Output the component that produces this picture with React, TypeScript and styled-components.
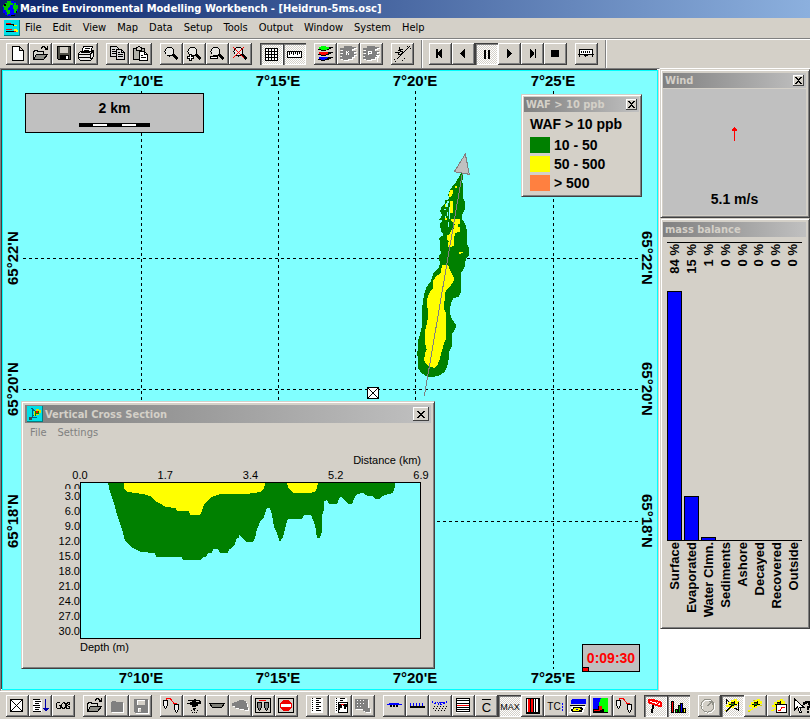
import React, { ReactNode } from "react";
import styled, { createGlobalStyle, css } from "styled-components";

const face = "#d4d0c8";
const shade = "#808080";
const dark = "#404040";
const water = "#80ffff";
const oil = "#008000";
const thick = "#ffff00";

const tahoma = `"DejaVu Sans Condensed", "DejaVu Sans", sans-serif`;
const arial = `"Liberation Sans", Arial, sans-serif`;

const GlobalStyle = createGlobalStyle`
  * { box-sizing: border-box; }
  body { margin: 0; background: #fff; overflow: hidden; }
  button { font: inherit; color: inherit; }
`;

const Page = styled.div`
  display: flex;
  flex-direction: column;
  min-height: 100vh;
  overflow: hidden;
  font-family: ${arial};
  font-size: 11px;
  color: #000;
  background: ${face};
`;

const TitleBar = styled.header`
  display: flex;
  align-items: center;
  gap: 1px;
  height: 18px;
  padding-left: 2px;
  background: linear-gradient(90deg, #0a246a, #8cb0de);
  color: #fff;
`;

const AppTitle = styled.h1`
  margin: 0;
  font: bold 11px/16px ${tahoma};
  white-space: nowrap;
`;

const MenuBar = styled.nav`
  display: flex;
  align-items: center;
  height: 21px;
  padding-left: 4px;
  border-bottom: 1px solid ${shade};
`;

const MenuItem = styled.button`
  padding: 0 6px 0 5px;
  border: 0;
  background: none;
  font: 11px/16px ${tahoma};
  &:disabled { color: ${shade}; }
`;

const ToolBar = styled.div<{ $height: number }>`
  display: flex;
  height: ${(p) => p.$height}px;
  padding: 3px 0 0 6px;
  border-top: 1px solid #fff;
  gap: 8px;
  flex: none;
  overflow: hidden;
`;

const Group = styled.div`
  display: flex;
  flex: none;
`;

const Divider = styled.div`
  flex: none;
  width: 2px;
  height: 28px;
  margin: -3px -2px 0 -1px;
  border-left: 1px solid ${shade};
  border-right: 1px solid #fff;
`;

const ToolButton = styled.button<{ $pressed?: boolean }>`
  display: block;
  flex: none;
  width: 23px;
  height: 22px;
  padding: 0;
  border: 0;
  overflow: hidden;
  ${(p) =>
    p.$pressed
      ? css`
          background: repeating-conic-gradient(#fff 0 25%, ${face} 0 50%) 0 0 / 2px 2px;
          box-shadow: inset 1px 1px ${dark}, inset 2px 2px ${shade}, inset -1px -1px #fff;
        `
      : css`
          background: ${face};
          box-shadow: inset -1px -1px ${dark}, inset 1px 1px #fff, inset -2px -2px ${shade};
        `}
`;

const Glyph = styled.svg`
  display: block;
  shape-rendering: crispEdges;
`;

const Workspace = styled.main`
  display: flex;
  flex: 1;
  background: #fff;
`;

const MapFrame = styled.section`
  display: flex;
  flex: 1;
  border-style: solid;
  border-width: 1px;
  border-color: ${shade} #fff ${face} ${shade};
`;

const MapCanvas = styled.div`
  position: relative;
  flex: 1;
  overflow: hidden;
  background: ${water};
  border: 1px solid #00ffff;
  margin: 1px 1px 0 1px;
  box-shadow: -1px -1px ${dark}, 1px 0 ${face};
`;

const Grid = styled.svg`
  position: absolute;
  inset: 20px 18px 20px 20px;
  width: calc(100% - 38px);
  height: calc(100% - 40px);
  shape-rendering: crispEdges;
`;

const Slick = styled.svg`
  position: absolute;
  left: 397px;
  top: 69px;
  shape-rendering: crispEdges;
`;

const Marker = styled.svg`
  position: absolute;
  left: 364px;
  top: 316px;
  shape-rendering: crispEdges;
`;

const Longitude = styled.span<{ $x: number; $edge: "top" | "bottom" }>`
  position: absolute;
  left: ${(p) => p.$x}px;
  ${(p) => p.$edge}: ${(p) => (p.$edge === "top" ? 1 : 3)}px;
  width: 60px;
  margin-left: -30px;
  text-align: center;
  font: bold 15px/17px ${arial};
`;

const Latitude = styled.span<{ $y: number; $edge: "left" | "right" }>`
  position: absolute;
  top: ${(p) => p.$y}px;
  ${(p) => p.$edge}: 1px;
  height: 60px;
  margin-top: -30px;
  text-align: center;
  writing-mode: vertical-rl;
  font: bold 15px/17px ${arial};
  ${(p) => p.$edge === "left" && "transform: rotate(180deg);"}
`;

const ScaleBox = styled.div`
  position: absolute;
  left: 22px;
  top: 22px;
  display: flex;
  flex-direction: column;
  align-items: center;
  gap: 6px;
  width: 179px;
  height: 40px;
  padding-top: 6px;
  border: 1px solid #000;
  background: #c0c0c0;
  font: bold 14px/17px ${arial};
`;

const Clock = styled.div`
  position: absolute;
  right: 17px;
  bottom: 17px;
  width: 58px;
  height: 28px;
  border: 1px solid #000;
  background: #c0c0c0;
  color: #f00;
  font: bold 14px/26px ${arial};
  text-align: center;
`;

const Elapsed = styled.i`
  position: absolute;
  left: -1px;
  bottom: -1px;
  width: 7px;
  height: 5px;
  border: 1px solid #000;
  background: #f00;
`;

const windowFrame = css`
  padding: 1px;
  background: ${face};
  border: 1px solid;
  border-color: ${face} ${dark} ${dark} ${face};
  box-shadow: inset 1px 1px #fff, inset -1px -1px ${shade};
`;

const LegendWindow = styled.section`
  ${windowFrame}
  position: absolute;
  left: 518px;
  top: 23px;
  width: 121px;
  padding: 2px 2px 2px;
`;

const SectionWindow = styled.section`
  ${windowFrame}
  position: absolute;
  left: 18px;
  top: 330px;
  width: 414px;
  padding: 3px 3px 13px;
`;

const Caption = styled.header<{ $height: number }>`
  display: flex;
  align-items: center;
  justify-content: space-between;
  height: ${(p) => p.$height}px;
  padding: 0 2px;
  background: linear-gradient(90deg, #808080, #c0c0c0);
  color: ${face};
`;

const CaptionText = styled.h2`
  display: flex;
  align-items: center;
  gap: 2px;
  margin: 0;
  font: bold 11px/15px ${tahoma};
  white-space: nowrap;
`;

const CloseButton = styled.button<{ $large?: boolean }>`
  display: grid;
  place-items: center;
  width: ${(p) => (p.$large ? 16 : 11)}px;
  height: ${(p) => (p.$large ? 14 : 11)}px;
  padding: 0;
  border: 0;
  background: ${face};
  box-shadow: inset -1px -1px ${dark}, inset 1px 1px #fff;
`;

const Legend = styled.div`
  padding: 4px 5px 0 6px;
  font: bold 14px/16px ${arial};
  white-space: nowrap;
`;

const LegendTitle = styled.div`
  line-height: 17px;
  margin-bottom: 4px;
`;

const LegendRow = styled.div`
  display: flex;
  gap: 4px;
  margin-bottom: 3px;
`;

const Swatch = styled.span<{ $color: string }>`
  width: 20px;
  height: 16px;
  background: ${(p) => p.$color};
`;

const SectionMenu = styled.nav`
  display: flex;
  height: 20px;
  align-items: center;
`;

const SectionBody = styled.div`
  display: grid;
  grid-template-columns: 55px 341px;
  padding-top: 9px;
  font: 11px/14px ${arial};
`;

const AxisName = styled.div<{ $end?: boolean }>`
  grid-column: 2;
  text-align: ${(p) => (p.$end ? "right" : "left")};
  line-height: 16px;
`;

const DistanceAxis = styled.div`
  grid-column: 2;
  display: flex;
  justify-content: space-between;
  margin: 0 -15px;
  line-height: 14px;
`;

const Tick = styled.span`
  width: 30px;
  text-align: center;
`;

const DepthAxis = styled.div`
  display: flex;
  flex-direction: column;
  text-align: right;
  line-height: 15px;
`;

const DepthTick = styled.span<{ $cut?: boolean }>`
  height: ${(p) => (p.$cut ? 7 : 15)}px;
  line-height: ${(p) => (p.$cut ? 12 : 15)}px;
  overflow: hidden;
`;

const Plot = styled.div`
  border: 1px solid #000;
  background: ${water};
`;

const Profile = styled.svg`
  display: block;
  width: 100%;
  shape-rendering: crispEdges;
`;

const SideColumn = styled.aside`
  flex: none;
  width: 150px;
  padding-top: 1px;
`;

const SideWindow = styled.section`
  ${windowFrame}
  padding: 3px 3px 2px 2px;
`;

const WindBody = styled.div`
  display: flex;
  flex-direction: column;
  align-items: center;
  justify-content: space-between;
  height: 126px;
  margin-top: 1px;
  padding: 38px 0 7px;
  background: #c0c0c0;
  font: bold 14px/17px ${arial};
`;

const Balance = styled.div`
  padding: 5px 4px 4px;
  font: bold 13px/15px ${arial};
`;

const Columns = styled.div`
  display: flex;
  height: 299px;
  border-top: 1px solid #000;
  border-bottom: 1px solid #000;
`;

const Column = styled.div`
  display: flex;
  flex-direction: column;
  justify-content: space-between;
  width: 17px;
  padding-top: 1px;
`;

const Upright = styled.span`
  writing-mode: vertical-rl;
  transform: rotate(180deg);
  white-space: pre;
  width: 15px;
`;

const Bar = styled.i`
  display: block;
  width: 15px;
  background: #00f;
  border: solid #000;
  border-width: 1px 1px 0;
`;

const Names = styled.div`
  display: flex;
  align-items: flex-start;
  gap: 2px;
  height: 81px;
  padding-top: 1px;
`;

function Icon({ children }: { children: ReactNode }) {
  return (
    <Glyph width="23" height="22" viewBox="0 0 23 22" fill="none" stroke="#000" aria-hidden="true">
      {children}
    </Glyph>
  );
}

function Greyed({ d }: { d: string }) {
  return (
    <g stroke="none" fillRule="evenodd">
      <path d={d} fill="#fff" transform="translate(1 1)" />
      <path d={d} fill={shade} />
    </g>
  );
}

function Lens() {
  return (
    <>
      <circle cx="9.5" cy="8.5" r="4.5" fill="#e8e8e4" />
      <path d="M12.5 11.5l5 5M13.5 11.5l4.5 4.5" strokeWidth="1.5" />
    </>
  );
}

const folder = (
  <>
    <path d="M4.5 16.5v-8h1v-1h3v1h6v3" fill="#d8d8d0" />
    <path d="M4.5 16.5l3-5h11l-4 5z" fill="#909088" />
    <path d="M12.5 5.5v-1h1v-1h2v1h1v1h2M18.5 3v3h-3" />
  </>
);

const pins = (
  <>
    <path d="M3.5 5.5h4v5l-2 3l-2-3zM14.5 9.5h4v5l-2 3l-2-3z" fill="#eee" />
    <path d="M5.5 4.5h1v-1h4v1h1v1l2 2v1h3" stroke="#f00" />
  </>
);

const layersShape =
  "M7 3h8v1h4v1h-2v1h-2v2h4v1h-2v2h2v1h-2v2h-2v2h-4v1h-5v-1h-3v-2h2v-1h-2v-2h3v-1h-3v-2h3v-1h-3v-2h4z";

const blob = (
  <g stroke="none">
    <path d="M10 5h3v-1h3v2h2v3h-2v2h-3v2h-5v-1h-3v-2h2v-3h3z" fill="#ff0" />
    <path d="M11 7h2v-1h1v3h2v1h-3v1h-2v1h-1v-2h-2v-1h2v-2z" fill="#000" />
    <path d="M10 8h3v2h-3z" fill="#080" />
    <path d="M4 15h2v-1h2v-1h1v2h-2v1h-3z" fill="#ff0" />
    <path d="M11 8h1v1h-1z" fill="#f00" />
  </g>
);

type Tool = { name: string; icon: ReactNode; pressed?: boolean; disabled?: boolean };
const t = (name: string, icon: ReactNode, pressed = false, disabled = false): Tool => ({ name, icon, pressed, disabled });

const openTool = t("Open", folder);
const saveShape = "M5 4h14v14h-13l-1-1zM8 5v5h8v-5zM9 13v4h3v-4z";

const fileTools: Tool[][] = [
  [
    t("New", <path d="M6.5 3.5h7l3.5 3.5v10h-10.5zM13.5 3.5v4h3.5" fill="#fff" />),
    openTool,
    t("Save", <>
      <path d="M5.5 3.5h13v13h-12l-1-1z" fill="#505048" />
      <path d="M8 4h8v6h-8z" fill={face} stroke="none" />
      <path d="M8 12h9v5h-9z" fill="#000" stroke="none" /><path d="M14 13h2v3h-2z" fill="#fff" stroke="none" />
    </>),
    t("Print", <>
      <path d="M6.5 9.5l2-6h9l-2 6" fill="#fff" /><path d="M9.5 5.5h5M8.5 7.5h5" />
      <path d="M3.5 10.5l2-2h11l2-1v6l-3 4h-10l-2-2z" fill="#e8e8e8" />
      <path d="M3 11.5h12l3-3M4 14.5h12M15.5 11v5M6 9.5h9" />
    </>),
  ],
  [
    t("Copy", <>
      <path d="M4.5 3.5h6l2.5 3v7h-8.5z" fill="#d8d8d8" /><path d="M6 6.5h3M6 8.5h5M6 10.5h5" />
      <path d="M10.5 6.5h5l3 3v7h-8z" fill="#d8d8d8" /><path d="M15.5 6.5v3h3M12 9.5h2M12 11.5h5M12 13.5h5" />
    </>),
    t("Paste", <>
      <path d="M4.5 5.5h11v11h-11z" fill="#b0b0a8" /><path d="M7.5 7.5v-3h1l1-1h1l1 1h1v3z" fill={face} />
      <path d="M10.5 8.5h5l3 3v6h-8z" fill="#fff" /><path d="M15.5 8.5v3h3M12 12.5h2M12 14.5h5" />
    </>),
  ],
  [
    t("Zoom", <Lens />),
    t("Zoom in", <><Lens /><path d="M6.5 11.5h2v2h2v2h-2v2h-2v-2h-2v-2h2z" fill="#fff" /></>),
    t("Zoom out", <><Lens /><path d="M4.5 13.5h7v2h-7z" fill="#fff" /></>),
    t("Reset zoom", <><Lens /><path d="M4 4l11 11M15 4l-11 11" stroke="#f00" /></>),
  ],
  [
    t("Grid", <path d="M5.5 5.5h12v12h-12zM8.5 5v13M11.5 5v13M14.5 5v13M5 8.5h13M5 11.5h13M5 14.5h13" fill="#fff" />, true),
    t("Scale", <><path d="M4.5 8.5h14v6h-14z" fill="#fff" /><path d="M6.5 9v3M8.5 9v2M10.5 9v3M12.5 9v2M14.5 9v3M16.5 9v2" /></>, true),
  ],
  [
    t("Layers", <g stroke="none">
      <path d="M8 14h11v1h-2v1h-2v1h-4v1h-4v-1h-3v-1h2z" fill="#000" /><path d="M5 14h9v1h-1v1h-2v1h-4v-1h-2v-1h-1z" fill="#00f" />
      <path d="M8 9h11v1h-2v1h-2v1h-3v1h-5v-1h-3v-1h2z" fill="#000" /><path d="M5 9h9v2h-2v1h-5v-1h-2v-1h-1z" fill="#f00" />
      <path d="M8 4h11v1h-2v1h-2v1h-3v1h-5v-1h-3v-1h2z" fill="#000" /><path d="M7 3h5v1h3v2h-2v1h-6v-1h-2v-2h2z" fill="#0f0" />
    </g>),
    t("Layer record", <><Greyed d={layersShape} /><path d="M9.5 8v4M10 9.500h1M11.5 8v1M11.5 10v2" stroke="#fff" /></>, false, true),
    t("Layer query", <><Greyed d={layersShape} /><path d="M8.5 8v4M9 8.5h2v2h-2M15.5 12.5h3v2l-1 1v3" stroke="#fff" /></>, false, true),
  ],
  [
    t("Measure", <>
      <path d="M17.5 4.5l-12 12" /><path d="M3.5 16v2h2M16 3.5h3v2M13.5 15v2M11 17.5h2" strokeDasharray="1 1" />
      <path d="M11.5 6.5h-3l-1 1l4 1v1l-1 2h-3v-2M8.5 4v3M4 9.5h5" />
    </>),
  ],
];

const solid = (d: string) => <path d={d} fill="#000" stroke="none" />;

const playTools: Tool[][] = [
  [
    t("First", solid("M7 6h2v9h-2zM13 6v9h-1v-1h-1v-1h-1v-1h-1v-3h1v-1h1v-1h1v-1z")),
    t("Back", solid("M13 6v9h-1v-1h-1v-1h-1v-1h-1v-1h-1v-1h1v-1h1v-1h1v-1h1v-1z")),
    t("Pause", solid("M9 7h2v9h-2zM13 7h2v9h-2z"), true),
    t("Play", solid("M9 6v9h1v-1h1v-1h1v-1h1v-1h1v-1h-1v-1h-1v-1h-1v-1h-1v-1z")),
    t("Last", solid("M14 6h1v9h-1zM9 6v9h1v-1h1v-1h1v-1h1v-3h-1v-1h-1v-1h-1v-1z")),
    t("Stop", solid("M7 7h8v7h-8z")),
  ],
  [
    t("Timeline", <>
      <path d="M4.5 6.5h13v5h-13z" fill="#fff" /><path d="M6.5 8v2M8.5 8v2M10.5 8v2M12.5 8v2M14.5 8v2" />
      <path d="M3 11.5h16M4.5 11v3M17.5 11v3M10.5 12v2M9 12.5h4" />
    </>),
  ],
];

const statusTools: Tool[][] = [
  [
    t("Site", <path d="M4.5 4.5h12v12h-12zM5 5l11 11M16 5l-11 11" fill="#fff" />),
    t("Sort list", <>
      <path d="M3.5 4.5h9v12h-9z" fill="#fff" stroke="none" /><path d="M4 4.5h7M6 6.5h6M6 8.5h4M4 10.5h7M6 12.5h5M6 14.5h4M4 16.5h8" />
      <path d="M16.5 4v12M13.5 13.5h6M14.5 14.5h4M15.5 15.5h2" stroke="#00a" />
    </>),
    t("Link", <><path d="M8.5 8.5l-1-1h-2l-1 1v4l1 1h3v-3h-2M11.5 7.5h1l1 2v2l-1 2h-2l-1-2v-2zM14 8.5l3-1v2l-2 1l2 1v2h-2l-1-2z" /><path d="M8 10.5h2M13 10.5h2" /></>),
  ],
  [
    openTool,
    t("Folder", <Greyed d="M5 7h1v-1h4v1h7v10h-12z" />, false, true),
    t("Save run", <Greyed d={saveShape} />, false, true),
  ],
  [
    t("Drifters", pins),
    t("Aircraft", <>{solid("M5 5h6v-1h2v1h4v1h1v3h-3v2h-2v1h-4v-2h-2v-1h-3v-1h3v-1h2v-1h-4zM10 13h3v1h-1v2h-1v-1h-1z")}<path d="M8 15.5h1M14 15.5h1M11.5 17v1M9 17.5h1M13 17.5h1" /><path d="M13 6.5h3" stroke={face} /></>),
    t("Boom", <path d="M3.5 8.5h15l-3 4h-9z" fill="#808078" />),
    t("Oil drift", <Greyed d="M3 8h2v-1h3v-1h2v-1h5v1h2v2h1v4h1v3h-4v-1h-5v-1h-4v-2h-3z" />, false, true),
    t("Response", <><path d="M3.5 3.5h15v14h-15z" /><path d="M5.5 7.5h4v5l-2 3l-2-3zM12.5 7.5h4v5l-2 3l-2-3z" fill="#808080" /><path d="M6.5 6.5l1-1h6l1 1" stroke="#f00" /></>),
    t("No entry", <><path d="M3.5 3.5h15v14h-15z" /><circle cx="11" cy="10.5" r="6" fill="#e00" stroke="none" /><path d="M6 9h10v3h-10z" fill="#fff" stroke="none" /></>),
  ],
  [
    t("Report", <><path d="M5 3h12v15h-12z" fill="#fff" stroke="none" /><path d="M6 3.5h1M6 5.5h1M6 7.5h1M6 9.5h1M6 11.5h1M6 13.5h1M6 15.5h1M10 3.5h5M10 5.5h3M10 7.5h5M10 9.5h3M10 11.5h5M10 13.5h3M10 15.5h5" /></>),
    t("Chart report", <><path d="M6 3h12v15h-12z" fill="#fff" stroke="none" /><path d="M7.5 3v14" strokeDasharray="1 1" /><path d="M11 3.5h5M11 5.5h3" /><path d="M9 7.5h9v10h-9z" /><path d="M10 9h3v4h-2v2h-1zM14 9h4v3h-1v2h-2v-3h-1z" fill="#000" stroke="none" /><path d="M12 9.5h3" stroke="#f00" /></>),
    t("Key table", <Greyed d="M3 4h13v9h2v4h-5v-1h-2v-2h-8zM5 5v1h1v-1zM8 5v1h1v-1zM11 5v1h1v-1zM5 8v1h1v-1zM8 8v1h1v-1zM11 8v1h1v-1zM5 11v1h1v-1zM8 11v1h1v-1z" />, false, true),
  ],
  [
    t("Surface layer", <><path d="M4 9h2v-1h10v1h3v1h-15z" fill="#00f" stroke="none" /><path d="M7 10.5h9" strokeWidth="2" strokeDasharray="2 1" /></>),
    t("Surface depth", <><path d="M4 9.5h15" stroke="#00f" strokeDasharray="1 2" strokeWidth="3" /><path d="M4 12h15" strokeWidth="2" /></>),
    t("Water column", <><path d="M3.5 6v2h2v1h1v-2h2v2h1v-2h2v2h1v-2h2v2h1v-2h2v-1" stroke="#00f" strokeDasharray="2 1" /><path d="M5 11.5h13M4 13.5h13M6 15.5h11" strokeDasharray="1 2" /></>),
    t("Depth levels", <><path d="M4 3h14v15h-14z" fill="#fff" stroke="none" /><path d="M4 3.5h14M4 5.5h14M4 8.5h14M4 12.5h14M4 14.5h14M4 16.5h14M4.5 3v14M17.5 3v14" /><path d="M5 10.5h12" stroke="#f00" /></>),
    t("Mean concentration", <><path d="M7 4.5h9" /><text x="11.5" y="17" textAnchor="middle" fontFamily="Liberation Sans" fontSize="13" fill="#000" stroke="none">C</text></>),
    t("Maximum", <text x="12" y="15" textAnchor="middle" fontFamily="Liberation Sans" fontSize="9" fill="#000" stroke="none">MAX</text>, true),
    t("Time slices", <><path d="M5 3h13v15h-13z" fill="#fff" /><path d="M7.5 3v14M10.5 3v14" stroke="#f00" strokeWidth="2" /><path d="M5.5 3v15M9.5 3v15M12.5 3v15M14.5 3v15M17.5 3v15M5 3.5h13M5 17.5h13" /></>),
    t("Time course", <><text x="10" y="15" textAnchor="middle" fontFamily="Liberation Sans" fontSize="10" fill="#000" stroke="none">TC</text><path d="M18.5 8v9" stroke="#00f" strokeDasharray="2 1" /></>),
    t("Depth view", <g stroke="none"><path d="M5 4h14v5h-15v-4h1z" fill="#00f" /><path d="M3 10h15v1h-15z" fill="#000" /><path d="M5 11h14l-3 7h-14z" fill="#fff" /><path d="M6 12h9v1h1v2h-1v2h-10v-1h-1v-2h2z" fill="#000" /><path d="M7 13h6v1h1v1h-2v1h-6v-2h1z" fill="#ff0" /><path d="M9 14h2v1h-2z" fill="#00c" /></g>),
    t("Contours", <g stroke="none"><path d="M3 3h9v15h-9z" fill="#00f" /><path d="M11 3h7v15h-7l-2-10z" fill="#0f0" /><path d="M3 14h5v-3h4v3h2v3h4v1h-15z" fill="#000" /><path d="M9 11h3v3h-3zM4 15h5v-1h3v1h-2v1h-6z" fill="#f00" /></g>),
    t("Trajectory", pins),
  ],
  [
    t("Spill source", <><path d="M5 4.5h3l9 3v3h-3l-9-3z" fill="#fff" stroke="#f00" strokeWidth="2" /><path d="M8 6h2l5 3" stroke="#f00" /><path d="M9.5 10l-2 8" strokeWidth="2" /></>, true),
    t("Mass balance", <g stroke="none"><path d="M4 6h3v12h-3zM8 14h3v4h-3zM11 10h3v8h-3zM13 8h3v10h-3zM16 13h3v5h-3z" fill="#000" /><path d="M5 7h1v10h-1z" fill="#f00" /><path d="M9 15h1v2h-1z" fill="#0c0" /><path d="M12 11h1v6h-1z" fill="#080" /><path d="M14 9h1v8h-1z" fill="#00f" /><path d="M17 14h1v3h-1z" fill="#ff0" /></g>, true),
  ],
  [
    t("Wind", <><circle cx="10.5" cy="11.5" r="6.5" stroke="#fff" /><circle cx="9.5" cy="10.5" r="6.5" stroke="#909088" /><path d="M9.5 11l4-4M11 6.5h3v3" stroke="#909088" /></>, false, true),
    t("Cross section", <>{blob}<path d="M5.5 4.5v4M5 4.5l3 2M17.5 7v8l-4-2M5 16.5l5-5" /></>, true),
    t("Slick", <>{blob}<path d="M9 5h2M16 10h2M4 16h2" stroke="#cc0" /></>),
    t("Slick chart", <>{blob}<path d="M9.5 9.5h10v8h-10z" fill="#fff" /><path d="M11 15.5h2l2-3h3" stroke="#f00" /></>),
    t("Context help", <><path d="M4.5 4v11l3-3l2 5h2l-2-5h4z" fill="#fff" /><path d="M14 10v-2h2v-1h3v2h1v3h-2v3M17 17h2" strokeWidth="2" /></>),
  ],
];

function Tools({ groups }: { groups: Tool[][] }) {
  return (
    <>
      {groups.map((g, i) => (
        <Group key={i}>
          {g.map((tool) => (
            <ToolButton key={tool.name} type="button" aria-label={tool.name} $pressed={tool.pressed} disabled={tool.disabled}>
              <Icon>{tool.icon}</Icon>
            </ToolButton>
          ))}
        </Group>
      ))}
    </>
  );
}

function Close({ large }: { large?: boolean }) {
  return (
    <CloseButton type="button" aria-label="Close" $large={large}>
      <Glyph width={large ? 8 : 7} height="7" viewBox="0 0 8 7" aria-hidden="true">
        <path d="M0 0h2v1h1v1h2v-1h1v-1h2v1h-1v1h-1v1h-1v1h1v1h1v1h1v1h-2v-1h-1v-1h-2v1h-1v1h-2v-1h1v-1h1v-1h1v-1h-1v-1h-1v-1h-1z" />
      </Glyph>
    </CloseButton>
  );
}

const menus = ["File", "Edit", "View", "Map", "Data", "Setup", "Tools", "Output", "Window", "System", "Help"];
const meridians = [
  { label: "7°10'E", x: 138 },
  { label: "7°15'E", x: 275 },
  { label: "7°20'E", x: 412 },
  { label: "7°25'E", x: 550 },
];
const parallels = [
  { label: "65°22'N", y: 187 },
  { label: "65°20'N", y: 318 },
  { label: "65°18'N", y: 450 },
];
const legend = [
  { label: "10 - 50", color: oil },
  { label: "50 - 500", color: thick },
  { label: "> 500", color: "#ff8040" },
];
const balance = [
  { name: "Surface", value: 84 },
  { name: "Evaporated", value: 15 },
  { name: "Water Clmn.", value: 1 },
  { name: "Sediments", value: 0 },
  { name: "Ashore", value: 0 },
  { name: "Decayed", value: 0 },
  { name: "Recovered", value: 0 },
  { name: "Outside", value: 0 },
];
const depths = ["0.0", "3.0", "6.0", "9.0", "12.0", "15.0", "18.0", "21.0", "24.0", "27.0", "30.0"];

const slickOutline =
  "190,100 187,125 190,145 190,175 194,185 194,210 185,225 185,235 195,250 200,270 200,310 208,325 208,345 198,355 194,380 183,400 183,455 177,470 160,475 152,490 150,520 157,540 169,555 165,568 157,580 155,620 147,635 145,670 135,695 115,708 85,712 65,700 55,685 52,640 55,600 66,560 67,500 72,465 80,440 92,425 100,400 115,385 120,370 116,350 122,340 120,305 117,295 130,285 122,270 120,250 130,242 116,240 128,225 120,215 125,200 135,192 135,182 147,178 145,165 150,148 165,130 178,110 182,100";
const slickCore =
  "126,375 145,375 150,390 162,415 160,425 150,440 140,450 134,460 133,510 138,520 137,600 132,610 125,635 120,655 112,675 105,683 90,682 78,672 72,662 75,640 80,630 75,610 75,575 82,545 84,520 80,480 90,455 100,445 100,420 110,408 122,400";

const profileOuter =
  "27,0 29,9 31,14 34,24 36,32 39,40 42,50 44,58 47,61 52,65 60,69 74,70 75,74 101,74 102,77 120,77 121,75 126,73 127,70 131,70 132,66 137,66 139,70 147,70 148,66 151,65 154,61 156,55 158,55 158,51 160,54 162,55 165,59 172,59 174,55 176,46 180,37 183,34 186,25 189,25 191,32 193,44 196,50 199,59 202,54 205,42 207,36 221,36 223,32 230,32 234,42 236,55 239,55 241,49 241,32 243,27 243,18 246,17 248,21 256,21 258,16 260,13 262,16 267,21 271,21 273,16 276,11 282,10 287,13 292,13 294,16 299,16 301,13 308,11 312,10 314,4 314,0";
const profileCore =
  "43,0 43,6 47,9 62,11 71,14 73,17 78,20 85,24 95,25 96,28 108,28 109,32 119,32 121,28 123,22 126,18 131,14 139,11 166,11 179,9 183,6 184,0";

export default function App() {
  return (
    <>
      <GlobalStyle />
      <Page>
        <TitleBar>
          <Glyph width="17" height="16" viewBox="0 0 17 16" aria-hidden="true">
            <path d="M5 0h7v1h2v2h2v8h-2v2h-2v2h-7v-1h-2v-2h-2v-8h2v-2h2z" fill="#00f" />
            <path d="M5 0h4v2h2v2h-3v2h-1v1h-1v2h2v4h-2v1h-1v-3h-1v-2h-2v-3h-1v-2h2v-2h2zM12 2h2v2h2v4h-1v2h-1v2h-2v-4h-1v-4h1z" fill="#00c800" />
            <path d="M2 3h2v2h-2zM9 14h4v1h-4zM14 10h1v2h-1z" fill="#000" />
          </Glyph>
          <AppTitle>Marine Environmental Modelling Workbench - [Heidrun-5ms.osc]</AppTitle>
        </TitleBar>
        <MenuBar>
          <Glyph width="16" height="16" viewBox="0 0 16 16" aria-hidden="true">
            <path d="M0 0h16v16h-16z" fill="#00e0e8" />
            <path d="M2 4h7v1h3M2 11h8v-1h2" stroke="#000" fill="none" />
            <path d="M2 3.5h5M2 9.5h6M10 11.5h2" stroke="#f00" />
            <path d="M10 5h3v1h-3zM10 9h3v1h1v2h-2v-1h-2z" fill="#ff0" />
            <path d="M15.5 0v16M0 15.5h16" stroke="#008080" />
          </Glyph>
          {menus.map((m) => (
            <MenuItem key={m} type="button">{m}</MenuItem>
          ))}
        </MenuBar>
        <ToolBar $height={29} role="toolbar" aria-label="Standard">
          <Tools groups={fileTools} />
          <Divider />
          <Tools groups={playTools} />
          <Divider />
        </ToolBar>
        <Workspace>
          <MapFrame aria-label="Map">
            <MapCanvas>
              <Grid aria-hidden="true">
                {meridians.map((m) => (
                  <line key={m.x} x1={m.x - 19.5} x2={m.x - 19.5} y1="0" y2="100%" stroke="#000" strokeDasharray="3 3" />
                ))}
                {parallels.map((p) => (
                  <line key={p.y} x1="0" x2="100%" y1={p.y - 19.5} y2={p.y - 19.5} stroke="#000" strokeDasharray="3 3" />
                ))}
              </Grid>
              {meridians.map((m) => (
                <React.Fragment key={m.x}>
                  <Longitude $x={m.x} $edge="top">{m.label}</Longitude>
                  <Longitude $x={m.x} $edge="bottom">{m.label}</Longitude>
                </React.Fragment>
              ))}
              {parallels.map((p) => (
                <React.Fragment key={p.y}>
                  <Latitude $y={p.y} $edge="left">{p.label}</Latitude>
                  <Latitude $y={p.y} $edge="right">{p.label}</Latitude>
                </React.Fragment>
              ))}
              <Slick width="100" height="260" viewBox="0 0 300 780" aria-hidden="true">
                <polygon points={slickOutline} fill={oil} />
                <path d="M139 190h4v12h-4zM147 200h3v36h-3zM133 206h6v4h-6zM140 215h4v14h-4zM135 228h4v6h-4zM144 246h3v16h-3zM142 184h5v4h-5z" fill={water} />
                <polygon points={slickCore} fill={thick} />
                <path d="M151 150h7v10l-5 12h-5v-14zM150 183h8v37h-8zM165 137h6v6h-6zM136 192h3v8h-3zM136 235h4v5h-4zM153 237h26v16h-4v9h5v12l-14 6l-5 14v24h-6v4h-12v-10l3-8l-6-6v-14h8l8-18h6v-10l5-4h-6v-7h-6zM178 335h10v4h-4v4h-6z" fill={thick} />
                <line x1="187" y1="100" x2="73" y2="768" stroke="#808080" strokeWidth="3" />
                <polygon points="196,42 163,95 208,103" fill="#c0c0c0" stroke="#808080" strokeWidth="3" />
              </Slick>
              <Marker width="12" height="12" viewBox="0 0 12 12" aria-hidden="true">
                <path d="M.5 .5h11v11h-11zM1 1l10 10M11 1l-10 10" fill="#fff" stroke="#000" />
              </Marker>
              <ScaleBox>
                2 km
                <Glyph width="71" height="4" viewBox="0 0 71 4" aria-hidden="true">
                  <path d="M0 0h71v4h-71z" />
                  <path d="M14 1h14v2h-14zM43 1h14v2h-14z" fill="#fff" />
                </Glyph>
              </ScaleBox>
              <LegendWindow>
                <Caption $height={15}>
                  <CaptionText>{"WAF > 10 ppb"}</CaptionText>
                  <Close />
                </Caption>
                <Legend>
                  <LegendTitle>{"WAF > 10 ppb"}</LegendTitle>
                  {legend.map((l) => (
                    <LegendRow key={l.label}>
                      <Swatch $color={l.color} />
                      {l.label}
                    </LegendRow>
                  ))}
                </Legend>
              </LegendWindow>
              <Clock>
                0:09:30
                <Elapsed />
              </Clock>
              <SectionWindow>
                <Caption $height={18}>
                  <CaptionText>
                    <Glyph width="16" height="16" viewBox="0 0 16 16" aria-hidden="true">
                      <path d="M0 0h16v16h-16z" fill="#00e0e8" />
                      <path d="M4 2l4 3h5M3 13l9-9M5 3v8l5 1" stroke="#006080" fill="none" />
                      <path d="M7 5h2v-2h3v1h2v3h-2v2h-3v1h-2z" fill="#dd0" />
                      <path d="M8 5h4v3h-3v2h-1z" fill="#080" />
                      <path d="M9 5h2v2h-2z" fill="#f00" />
                      <path d="M2 11h3v3h-3z" fill="#444" />
                      <path d="M15.5 0v16M0 15.5h16" stroke="#008080" />
                    </Glyph>
                    Vertical Cross Section
                  </CaptionText>
                  <Close large />
                </Caption>
                <SectionMenu>
                  <MenuItem type="button" disabled>File</MenuItem>
                  <MenuItem type="button" disabled>Settings</MenuItem>
                </SectionMenu>
                <SectionBody>
                  <AxisName $end>Distance (km)</AxisName>
                  <DistanceAxis>
                    {["0.0", "1.7", "3.4", "5.2", "6.9"].map((d) => (
                      <Tick key={d}>{d}</Tick>
                    ))}
                  </DistanceAxis>
                  <DepthAxis>
                    {depths.map((d, i) => (
                      <DepthTick key={d} $cut={i === 0}>{d}</DepthTick>
                    ))}
                  </DepthAxis>
                  <Plot>
                    <Profile viewBox="0 0 339 155" role="img" aria-label="Concentration by depth and distance">
                      <polygon points={profileOuter} fill={oil} />
                      <polygon points={profileCore} fill={thick} />
                      <polygon points="206,0 208,6 212,10 230,10 235,8 237,0" fill={thick} />
                    </Profile>
                  </Plot>
                  <AxisName>Depth (m)</AxisName>
                </SectionBody>
              </SectionWindow>
            </MapCanvas>
          </MapFrame>
          <SideColumn>
            <SideWindow>
              <Caption $height={15}>
                <CaptionText>Wind</CaptionText>
                <Close />
              </Caption>
              <WindBody>
                <Glyph width="5" height="14" viewBox="0 0 5 14" aria-label="Wind direction">
                  <path d="M2 0h1v1h1v1h1v2h-2v10h-1v-10h-2v-2h1v-1h1z" fill="#f00" />
                </Glyph>
                5.1 m/s
              </WindBody>
            </SideWindow>
            <SideWindow>
              <Caption $height={15}>
                <CaptionText>mass balance</CaptionText>
              </Caption>
              <Balance>
                <Columns>
                  {balance.map((b) => (
                    <Column key={b.name}>
                      <Upright>{b.value + " %"}</Upright>
                      {b.value > 0 && <Bar style={{ height: `${b.value}%` }} />}
                    </Column>
                  ))}
                </Columns>
                <Names>
                  {balance.map((b) => (
                    <Upright key={b.name}>{b.name}</Upright>
                  ))}
                </Names>
              </Balance>
            </SideWindow>
          </SideColumn>
        </Workspace>
        <ToolBar $height={28} role="toolbar" aria-label="Model">
          <Tools groups={statusTools} />
        </ToolBar>
      </Page>
    </>
  );
}
